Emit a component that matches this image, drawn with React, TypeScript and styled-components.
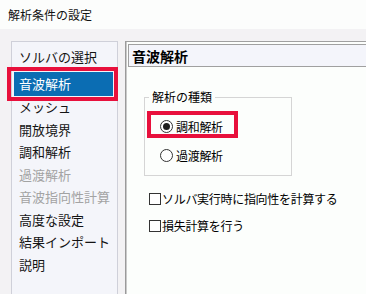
import React from 'react';
import styled, { createGlobalStyle, css } from 'styled-components';

const GlobalStyle = createGlobalStyle`
  html, body {
    margin: 0;
    padding: 0;
    background: #f3f2f4;
  }
  body {
    width: 366px;
    height: 294px;
    overflow: hidden;
    font-family: "Noto Sans CJK JP", "Noto Sans", sans-serif;
  }
`;

const navItems = [
  { label: 'ソルバの選択' },
  { label: '音波解析', selected: true },
  { label: 'メッシュ' },
  { label: '開放境界' },
  { label: '調和解析' },
  { label: '過渡解析', disabled: true },
  { label: '音波指向性計算', disabled: true },
  { label: '高度な設定' },
  { label: '結果インポート' },
  { label: '説明' }
];

const checkItems = ['ソルバ実行時に指向性を計算する', '損失計算を行う'];

export default function App() {
  return (
    <Window>
      <GlobalStyle />
      <TitleBar>解析条件の設定</TitleBar>
      <Body>
        <NavPanel>
          {navItems.map((item) =>
            item.selected ? (
              <SelectedFrame key={item.label}>
                <SelectedItem>{item.label}</SelectedItem>
              </SelectedFrame>
            ) : (
              <NavItem key={item.label} $disabled={item.disabled}>
                {item.label}
              </NavItem>
            )
          )}
        </NavPanel>
        <ContentPanel>
          <SectionHeader>音波解析</SectionHeader>
          <GroupBox>
            <Legend>解析の種類</Legend>
            <RadioRow $highlight>
              <Radio $checked />
              <OptionText>調和解析</OptionText>
            </RadioRow>
            <RadioRow>
              <Radio />
              <OptionText>過渡解析</OptionText>
            </RadioRow>
          </GroupBox>
          <CheckList>
            {checkItems.map((label) => (
              <CheckRow key={label}>
                <CheckBox />
                <OptionText>{label}</OptionText>
              </CheckRow>
            ))}
          </CheckList>
        </ContentPanel>
      </Body>
    </Window>
  );
}

const Window = styled.div`
  display: flex;
  flex-direction: column;
  width: 366px;
  height: 294px;
  overflow: hidden;
  color: #000;
`;

const TitleBar = styled.div`
  height: 29px;
  flex-shrink: 0;
  display: flex;
  align-items: center;
  padding-left: 8px;
  background: #fcfdfc;
  font-size: 12px;
  line-height: 12px;
  color: #111;
`;

const Body = styled.div`
  flex: 1;
  min-height: 0;
  display: flex;
  gap: 7px;
  padding: 12px 0 0 11px;
  background: #f3f2f4;
`;

const NavPanel = styled.div`
  width: 107px;
  flex-shrink: 0;
  box-sizing: border-box;
  padding-top: 3px;
  border: 1px solid #cfd0d9;
  border-bottom: none;
  background: #f4f5fa;
`;

const NavItem = styled.div<{ $disabled?: boolean }>`
  height: 22.5px;
  display: flex;
  align-items: center;
  padding-left: 7px;
  font-size: 13px;
  line-height: 13px;
  white-space: nowrap;
  color: #141414;

  ${({ $disabled }) =>
    $disabled &&
    css`
      color: #a3a3a3;
    `}
`;

const SelectedFrame = styled.div`
  margin: 3px 3px -1px -1px;
  padding: 1px 1px 1px 3px;
  outline: 4px solid #e8103c;
`;

const SelectedItem = styled.div`
  height: 24px;
  display: flex;
  align-items: center;
  padding-left: 5px;
  background: #0b6db3;
  color: #fff;
  font-size: 13px;
  line-height: 13px;
  white-space: nowrap;
`;

const ContentPanel = styled.div`
  width: 260px;
  flex-shrink: 0;
  box-sizing: border-box;
  border-top: 1px solid #a0a0a0;
  border-left: 1px solid #9a9a9a;
  box-shadow: inset 1px 0 0 #cacaca;
  background: #fcfefc;
`;

const SectionHeader = styled.div`
  height: 23px;
  box-sizing: border-box;
  margin: 2px 0 0 2px;
  padding-left: 3px;
  display: flex;
  align-items: center;
  border: 1px solid #a0a0a0;
  background: #f4f5fb;
  font-size: 14px;
  line-height: 14px;
  font-weight: 700;
`;

const GroupBox = styled.fieldset`
  width: 148px;
  box-sizing: border-box;
  margin: 24px 0 0 18px;
  padding: 12px 0 12px 0;
  border: 1px solid #d5d5d5;
  min-width: 0;
`;

const Legend = styled.legend`
  margin-left: 4px;
  padding: 0 3px;
  font-size: 12px;
  line-height: 12px;
`;

const RadioRow = styled.div<{ $highlight?: boolean }>`
  width: 83px;
  height: 19px;
  box-sizing: border-box;
  margin-left: 6px;
  padding: 4px 0 0 9px;
  display: flex;
  align-items: center;
  gap: 3px;

  & + & {
    margin-top: 10px;
  }

  ${({ $highlight }) =>
    $highlight &&
    css`
      outline: 4px solid #e8103c;
    `}
`;

const Radio = styled.span<{ $checked?: boolean }>`
  width: 13px;
  height: 13px;
  box-sizing: border-box;
  flex-shrink: 0;
  border: 1px solid #333;
  border-radius: 50%;
  background: #fff;
  display: flex;
  align-items: center;
  justify-content: center;

  ${({ $checked }) =>
    $checked &&
    css`
      &::after {
        content: '';
        width: 7px;
        height: 7px;
        border-radius: 50%;
        background: #1e1e1e;
      }
    `}
`;

const OptionText = styled.span`
  font-size: 12px;
  line-height: 12px;
  white-space: nowrap;
  letter-spacing: -0.3px;
`;

const CheckList = styled.div`
  display: flex;
  flex-direction: column;
  gap: 7px;
  margin: 13px 0 0 23px;
`;

const CheckRow = styled.div`
  height: 20px;
  display: flex;
  align-items: center;
  gap: 1px;
`;

const CheckBox = styled.span`
  width: 12px;
  height: 12px;
  box-sizing: border-box;
  flex-shrink: 0;
  border: 1px solid #333;
  background: #fff;
`;
